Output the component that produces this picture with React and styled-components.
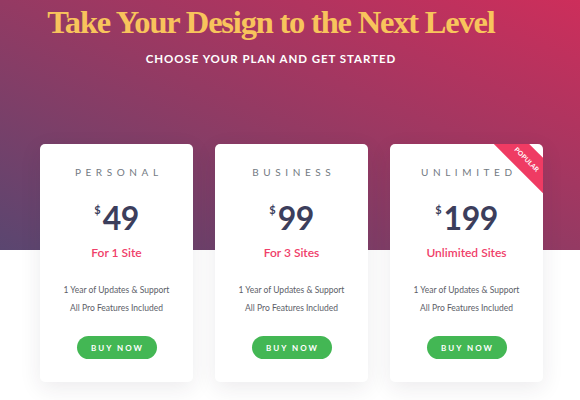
import styled, { createGlobalStyle } from "styled-components";

const GlobalStyle = createGlobalStyle`
  html, body {
    margin: 0;
    padding: 0;
    background: #ffffff;
  }
  body {
    font-family: Lato, "Open Sans", sans-serif;
    width: 580px;
    height: 400px;
    overflow: hidden;
  }
`;

const Hero = styled.header`
  height: 250px;
  padding: 2px 38px 0 0;
  box-sizing: border-box;
  text-align: center;
  background: linear-gradient(to top right, #5a4670 0%, #943a63 50%, #cd2e5b 100%);
`;

const Title = styled.h1`
  margin: 0;
  font-family: "Liberation Serif", "DejaVu Serif", serif;
  font-weight: 700;
  font-size: 32.5px;
  line-height: 40px;
  letter-spacing: -1.2px;
  white-space: nowrap;
  color: #f8c45c;
`;

const Subtitle = styled.h2`
  margin: 10px 0 0;
  font-family: Lato, "Open Sans", sans-serif;
  font-weight: 700;
  font-size: 11.5px;
  line-height: 14px;
  letter-spacing: 0.95px;
  color: #ffffff;
`;

const Plans = styled.section`
  display: grid;
  grid-template-columns: repeat(3, 153px);
  gap: 22px;
  padding-left: 40px;
  margin-top: -106px;
`;

const Card = styled.article`
  position: relative;
  overflow: hidden;
  display: flex;
  flex-direction: column;
  align-items: center;
  padding: 22px 0 23px;
  background: #ffffff;
  border-radius: 5px;
  box-shadow: 0 6px 22px rgba(40, 30, 60, 0.09);
`;

const PlanName = styled.div`
  font-size: 10px;
  line-height: 12px;
  letter-spacing: 4.6px;
  margin-right: -4.6px;
  color: #737a82;
  font-weight: 400;
`;

const Price = styled.div`
  display: flex;
  align-items: flex-start;
  margin-top: 25px;
  height: 30px;
  color: #3c3e5c;
  font-weight: 700;
`;

const Currency = styled.span`
  font-size: 11px;
  line-height: 11px;
  margin-top: 1px;
  margin-right: 2px;
`;

const Amount = styled.span`
  font-size: 32px;
  line-height: 30px;
  letter-spacing: -0.5px;
`;

const Sites = styled.div`
  margin-top: 14px;
  font-size: 12px;
  line-height: 12px;
  font-weight: 600;
  color: #f0406a;
`;

const Features = styled.ul`
  list-style: none;
  margin: 22px 0 0;
  padding: 0;
  text-align: center;
`;

const Feature = styled.li`
  font-size: 8.5px;
  line-height: 18px;
  color: #5c6068;
`;

const BuyButton = styled.button`
  margin-top: 19px;
  width: 80px;
  height: 23px;
  border: none;
  border-radius: 12px;
  background: #43b754;
  color: #ffffff;
  font-family: Lato, sans-serif;
  font-weight: 700;
  font-size: 8px;
  letter-spacing: 2px;
  padding: 0 0 0 2px;
  cursor: pointer;
`;

const Ribbon = styled.div`
  position: absolute;
  top: 3px;
  left: 82px;
  width: 110px;
  height: 25px;
  box-sizing: border-box;
  padding-top: 9px;
  transform: rotate(45deg);
  background: #ef3b63;
  color: #ffffff;
  font-size: 6.5px;
  line-height: 8px;
  font-weight: 700;
  text-align: center;
  letter-spacing: 0.2px;
`;

const plans = [
  { name: "PERSONAL", price: 49, sites: "For 1 Site" },
  { name: "BUSINESS", price: 99, sites: "For 3 Sites" },
  { name: "UNLIMITED", price: 199, sites: "Unlimited Sites", popular: true },
];

export default function App() {
  return (
    <>
      <GlobalStyle />
      <Hero>
        <Title>Take Your Design to the Next Level</Title>
        <Subtitle>CHOOSE YOUR PLAN AND GET STARTED</Subtitle>
      </Hero>
      <Plans>
        {plans.map((plan) => (
          <Card key={plan.name}>
            {plan.popular && <Ribbon>POPULAR</Ribbon>}
            <PlanName>{plan.name}</PlanName>
            <Price>
              <Currency>$</Currency>
              <Amount>{plan.price}</Amount>
            </Price>
            <Sites>{plan.sites}</Sites>
            <Features>
              <Feature>1 Year of Updates &amp; Support</Feature>
              <Feature>All Pro Features Included</Feature>
            </Features>
            <BuyButton>BUY NOW</BuyButton>
          </Card>
        ))}
      </Plans>
    </>
  );
}
